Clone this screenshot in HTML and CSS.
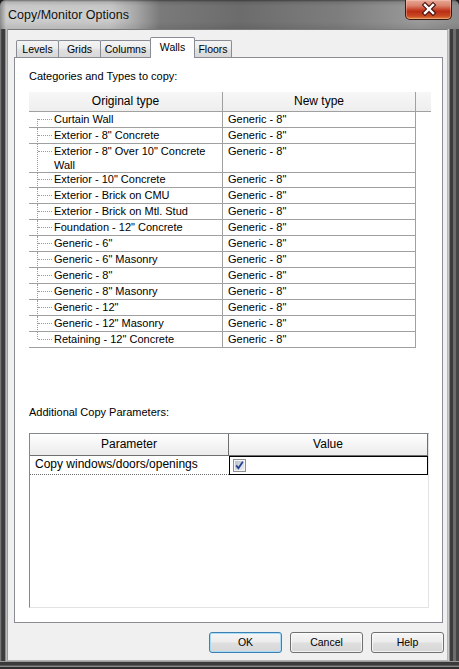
FILE: index.html
```html
<!DOCTYPE html>
<html>
<head>
<meta charset="utf-8">
<title>Copy/Monitor Options</title>
<link rel="stylesheet" href="styles.css">
</head>
<body>
<div class="window">
  <div class="titlebar">
    <span class="title">Copy/Monitor Options</span>
    <div class="close">
      <svg width="45" height="19" viewBox="0 0 45 19">
        <path d="M19 5 L27 13 M27 5 L19 13" stroke="#4a1510" stroke-width="4.6" stroke-linecap="square" fill="none"/>
        <path d="M19 5 L27 13 M27 5 L19 13" stroke="#ffffff" stroke-width="2.4" stroke-linecap="square" fill="none"/>
      </svg>
    </div>
  </div>
  <div class="middle">
    <div class="frame-left"></div>
    <div class="client">
      <div class="tabs">
        <div class="tab t-levels">Levels</div>
        <div class="tab t-grids">Grids</div>
        <div class="tab t-columns">Columns</div>
        <div class="tab t-walls active">Walls</div>
        <div class="tab t-floors">Floors</div>
      </div>
      <div class="panel">
        <div class="label">Categories and Types to copy:</div>
        <div class="grid">
          <div class="ghead">
            <div class="gh gh1">Original type</div>
            <div class="gh gh2">New type</div>
            <div class="gh gh3"></div>
          </div>
          <div class="grow"><div class="c1 first">Curtain Wall</div><div class="c2">Generic - 8"</div></div>
          <div class="grow"><div class="c1">Exterior - 8" Concrete</div><div class="c2">Generic - 8"</div></div>
          <div class="grow double"><div class="c1">Exterior - 8" Over 10" Concrete<br>Wall</div><div class="c2">Generic - 8"</div></div>
          <div class="grow"><div class="c1">Exterior - 10" Concrete</div><div class="c2">Generic - 8"</div></div>
          <div class="grow"><div class="c1">Exterior - Brick on CMU</div><div class="c2">Generic - 8"</div></div>
          <div class="grow"><div class="c1">Exterior - Brick on Mtl. Stud</div><div class="c2">Generic - 8"</div></div>
          <div class="grow"><div class="c1">Foundation - 12" Concrete</div><div class="c2">Generic - 8"</div></div>
          <div class="grow"><div class="c1">Generic - 6"</div><div class="c2">Generic - 8"</div></div>
          <div class="grow"><div class="c1">Generic - 6" Masonry</div><div class="c2">Generic - 8"</div></div>
          <div class="grow"><div class="c1">Generic - 8"</div><div class="c2">Generic - 8"</div></div>
          <div class="grow"><div class="c1">Generic - 8" Masonry</div><div class="c2">Generic - 8"</div></div>
          <div class="grow"><div class="c1">Generic - 12"</div><div class="c2">Generic - 8"</div></div>
          <div class="grow"><div class="c1">Generic - 12" Masonry</div><div class="c2">Generic - 8"</div></div>
          <div class="grow"><div class="c1 last">Retaining - 12" Concrete</div><div class="c2">Generic - 8"</div></div>
        </div>
        <div class="label label2">Additional Copy Parameters:</div>
        <div class="ptable">
          <div class="phead">
            <div class="ph">Parameter</div>
            <div class="ph">Value</div>
          </div>
          <div class="prow">
            <div class="pname">Copy windows/doors/openings</div>
            <div class="pval">
              <svg class="check" width="13" height="13" viewBox="0 0 13 13">
                <defs>
                  <linearGradient id="cb" x1="0" y1="0" x2="1" y2="1">
                    <stop offset="0" stop-color="#b9c0cb"/>
                    <stop offset="1" stop-color="#eef0f4"/>
                  </linearGradient>
                </defs>
                <rect x="0.5" y="0.5" width="12" height="12" fill="#f4f4f4" stroke="#8e8f8f"/>
                <rect x="2" y="2" width="9" height="9" fill="url(#cb)"/>
                <path d="M3.2 6.4 L5.4 9.2 L9.8 2.8" stroke="#23408f" stroke-width="1.7" fill="none"/>
              </svg>
            </div>
          </div>
        </div>
      </div>
      <div class="buttons">
        <div class="btn default">OK</div>
        <div class="btn">Cancel</div>
        <div class="btn">Help</div>
      </div>
    </div>
    <div class="frame-right"></div>
  </div>
  <div class="frame-bottom"></div>
</div>
</body>
</html>
```

FILE: styles.css
```css
* { box-sizing: border-box; }
html, body { margin: 0; padding: 0; }
body {
  background: #1e1e1e;
  font-family: "Liberation Sans", Arial, sans-serif;
  color: #000;
}
.window {
  width: 459px;
  height: 669px;
  display: flex;
  flex-direction: column;
  border-radius: 6px 6px 0 0;
  overflow: hidden;
  background: #5a5a5a;
}
.titlebar {
  height: 29px;
  flex: none;
  display: flex;
  align-items: flex-start;
  background:
    linear-gradient(to bottom, rgba(0,0,0,0.45) 0, rgba(0,0,0,0.1) 2px, rgba(0,0,0,0) 6px, rgba(0,0,0,0) 22px, rgba(0,0,0,0.08) 29px),
    linear-gradient(to right, #8a8a8a 0, #c9c9c9 6px, #c6c6c6 110px, #a8a8a8 135px, #7a7a7a 160px, #6c6c6c 240px, #7e7e7e 340px, #9a9a9a 420px, #8c8c8c 459px);
}
.title {
  font-size: 12.5px;
  line-height: 16px;
  margin: 7px 0 0 8px;
  color: #111;
  text-shadow: 0 0 6px rgba(255,255,255,0.6);
}
.close {
  margin-left: auto;
  margin-right: 7px;
  width: 47px;
  height: 20px;
  border: 1px solid #3e1812;
  border-top: none;
  border-radius: 0 0 5px 5px;
  background: linear-gradient(to bottom, #e9a896 0%, #d9826c 30%, #c8452b 50%, #b92e16 60%, #c94a22 85%, #e3883f 100%);
  box-shadow: inset 0 0 0 1px rgba(255,220,210,0.35);
}
.close svg { display: block; }
.middle {
  flex: 1;
  display: flex;
}
.frame-left {
  width: 7px;
  flex: none;
  background: linear-gradient(to right, #777 0 1px, #4a4a4a 1px 2px, #3d3d3d 2px 5px, #8e8e8e 5px 6px, #bdbdbd 6px 7px);
}
.frame-right {
  width: 11px;
  flex: none;
  background: linear-gradient(to right, #c9c9c9 0 1px, #8a8a8a 1px 2px, #3c3c3c 2px 5px, #6d6d6d 5px 8px, #454545 8px 11px);
}
.frame-bottom {
  height: 8px;
  flex: none;
  background: linear-gradient(to bottom, #9a9a9a 0 1px, #3a3a3a 1px 4px, #5a5a5a 4px 5px, #8a8a8a 5px 6px, #2e2e2e 6px 8px);
}
.client {
  width: 441px;
  flex: none;
  background: #f0f0f0;
  border: 1px solid #7a7a7a;
  border-left-color: #9a9a9a;
  border-right-color: #b5b5b5;
  border-bottom-color: #b5b5b5;
  display: flex;
  flex-direction: column;
}
.tabs {
  display: flex;
  align-items: flex-end;
  height: 20px;
  margin: 7px 0 0 8px;
  position: relative;
  z-index: 2;
}
.tab {
  height: 17px;
  border: 1px solid #898c95;
  border-bottom: none;
  border-radius: 2px 2px 0 0;
  background: linear-gradient(to bottom, #f4f4f4 0%, #ececec 45%, #e0e0e0 55%, #d8d8d8 100%);
  font-size: 10.5px;
  line-height: 16px;
  text-align: center;
  margin-right: -1px;
}
.t-levels { width: 43px; }
.t-grids { width: 43px; }
.t-columns { width: 51px; }
.t-walls { width: 45px; }
.t-floors { width: 38px; }
.tab.active {
  height: 21px;
  background: #fff;
  padding-top: 1px;
  margin-bottom: -1px;
  position: relative;
  z-index: 3;
}
.panel {
  height: 566px;
  margin: 0 4px 0 6px;
  background: #fff;
  border: 1px solid #898c95;
  display: flex;
  flex-direction: column;
}
.label {
  font-size: 11px;
  line-height: 14px;
  margin: 11px 0 0 14px;
}
.label2 { margin-top: 57px; }
.grid {
  margin: 9px 0 0 14px;
  width: 402px;
}
.ghead {
  display: grid;
  grid-template-columns: 194px 193px 15px;
  height: 20px;
  background: linear-gradient(to bottom, #f7f7f7 0%, #eeeeee 100%);
  border-bottom: 1px solid #a0a0a0;
}
.gh {
  font-size: 12px;
  line-height: 19px;
  text-align: center;
}
.gh1, .gh2 { border-right: 1px solid #a0a0a0; }
.grow {
  display: grid;
  grid-template-columns: 194px 193px;
  height: 16px;
}
.grow.double { height: 28px; }
.c1, .c2 {
  font-size: 11px;
  line-height: 15px;
  border-bottom: 1px solid #a0a0a0;
  border-right: 1px solid #a0a0a0;
  white-space: nowrap;
}
.c1 {
  padding-left: 25px;
  position: relative;
}
.c2 { padding-left: 5px; }
.double .c1 {
  line-height: 13.5px;
  padding-top: 1px;
}
.c1::before {
  content: "";
  position: absolute;
  left: 9px;
  width: 14px;
  top: 7px;
  border-top: 1px dotted #9a9a9a;
}
.c1::after {
  content: "";
  position: absolute;
  left: 8px;
  top: 0;
  bottom: -1px;
  border-left: 1px dotted #9a9a9a;
}
.c1.first::after { top: 7px; }
.c1.last::after { bottom: 8px; }
.ptable {
  margin: 14px 0 0 14px;
  width: 400px;
  height: 175px;
  border: 1px solid;
  border-color: #828790 #e3e3e3 #e3e3e3 #828790;
  background: #fff;
}
.phead {
  display: grid;
  grid-template-columns: 199px 199px;
  height: 22px;
}
.ph {
  font-size: 12px;
  line-height: 20px;
  text-align: center;
  background: linear-gradient(to bottom, #ffffff 0%, #f3f3f3 60%, #ebebeb 100%);
  border-right: 1px solid #6f6f6f;
  border-bottom: 1px solid #6f6f6f;
}
.prow {
  display: grid;
  grid-template-columns: 199px 199px;
  height: 18px;
}
.pname {
  font-size: 12px;
  line-height: 17px;
  padding-left: 5px;
  border-bottom: 1px dotted #6a6a6a;
}
.pval {
  border: 1px solid #000;
  padding: 2px 3px;
}
.check { display: block; }
.buttons {
  display: flex;
  justify-content: flex-end;
  gap: 8px;
  margin-top: 9px;
  padding-right: 3px;
}
.btn {
  width: 73px;
  height: 21px;
  border: 1px solid #707070;
  border-radius: 3px;
  background: linear-gradient(to bottom, #f6f6f6 0%, #ececec 48%, #dfdfdf 52%, #d6d6d6 100%);
  box-shadow: inset 0 0 0 1px rgba(255,255,255,0.7);
  font-size: 10.5px;
  line-height: 19px;
  text-align: center;
}
.btn.default {
  border-color: #3c7fb1;
  box-shadow: inset 0 0 0 1px #a9dcf6;
}
```
